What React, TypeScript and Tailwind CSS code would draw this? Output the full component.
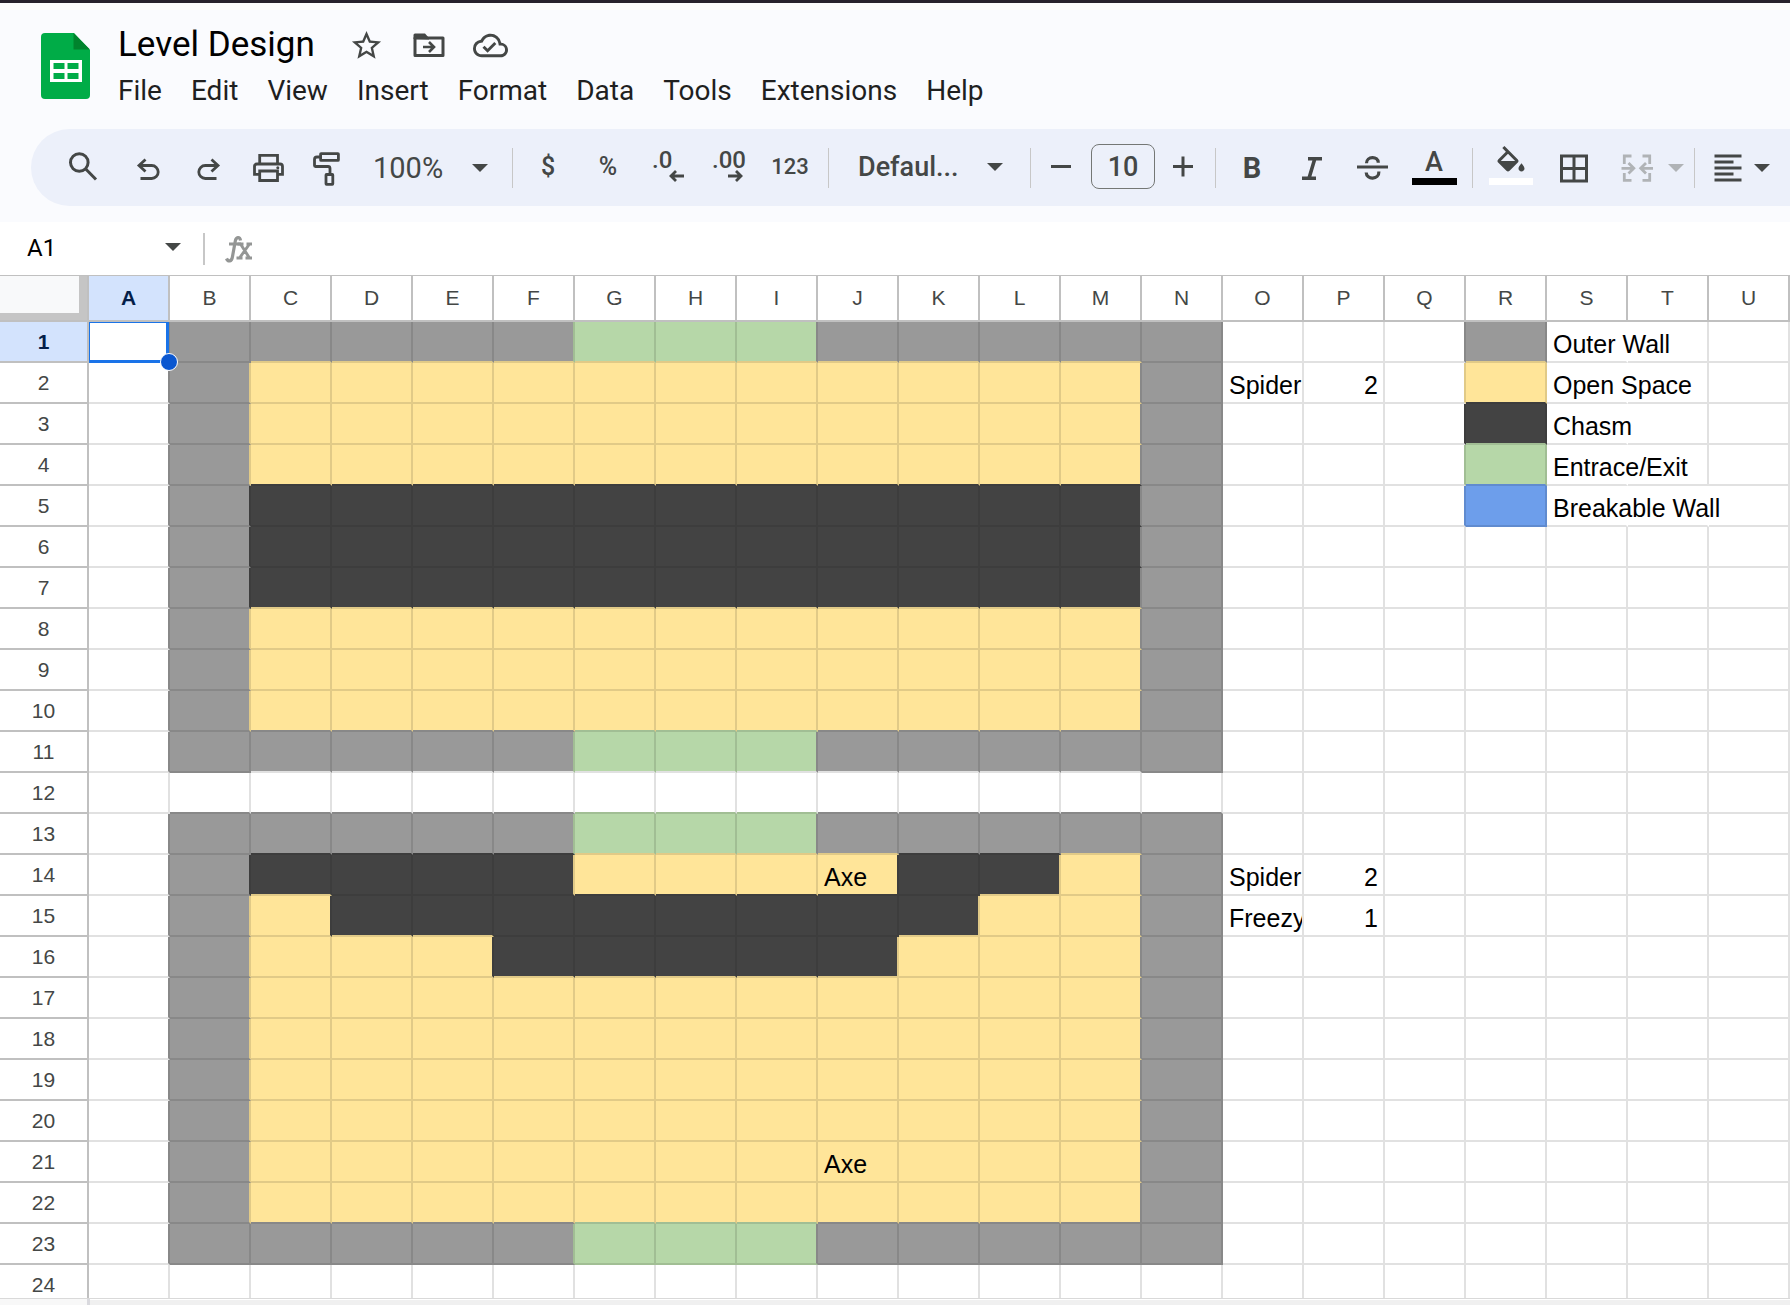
import type { ReactNode } from "react";
import { MdOutlineCloudDone, MdStarBorder } from "react-icons/md";

const COLUMNS = "ABCDEFGHIJKLMNOPQRSTU".split("");

// One character per cell: # wall, y open space, k chasm, g entrance, b breakable, . empty
const ROWS = [
  ".#####ggg#####...#...",
  ".#yyyyyyyyyyy#...y...",
  ".#yyyyyyyyyyy#...k...",
  ".#yyyyyyyyyyy#...g...",
  ".#kkkkkkkkkkk#...b...",
  ".#kkkkkkkkkkk#.......",
  ".#kkkkkkkkkkk#.......",
  ".#yyyyyyyyyyy#.......",
  ".#yyyyyyyyyyy#.......",
  ".#yyyyyyyyyyy#.......",
  ".#####ggg#####.......",
  ".....................",
  ".#####ggg#####.......",
  ".#kkkkyyyykky#.......",
  ".#ykkkkkkkkyy#.......",
  ".#yyykkkkkyyy#.......",
  ".#yyyyyyyyyyy#.......",
  ".#yyyyyyyyyyy#.......",
  ".#yyyyyyyyyyy#.......",
  ".#yyyyyyyyyyy#.......",
  ".#yyyyyyyyyyy#.......",
  ".#yyyyyyyyyyy#.......",
  ".#####ggg#####.......",
  ".....................",
];

const VALUES: Record<string, string> = {
  S1: "Outer Wall",
  S2: "Open Space",
  S3: "Chasm",
  S4: "Entrace/Exit",
  S5: "Breakable Wall",
  O2: "Spider",
  P2: "2",
  J14: "Axe",
  O14: "Spider",
  P14: "2",
  O15: "Freezy",
  P15: "1",
  J21: "Axe",
};

// Cells whose right grid line is hidden by text running over it
const OVERFLOWING = ["S1", "S2", "S3", "S4", "S5", "T5"];

const FILL: Record<string, string> = {
  ".": "",
  "#": "bg-[#999999]",
  y: "bg-[#ffe599]",
  k: "bg-[#434343]",
  g: "bg-[#b6d7a8]",
  b: "bg-[#6d9eeb]",
};
const RIGHT: Record<string, string> = {
  ".": "border-r-[#e1e1e1]",
  "#": "border-r-[#888888]",
  y: "border-r-[#e1ca87]",
  k: "border-r-[#3d3d3d]",
  g: "border-r-[#a1be94]",
  b: "border-r-[#608bcf]",
};
const BOTTOM: Record<string, string> = {
  ".": "border-b-[#e1e1e1]",
  "#": "border-b-[#888888]",
  y: "border-b-[#e1ca87]",
  k: "border-b-[#3d3d3d]",
  g: "border-b-[#a1be94]",
  b: "border-b-[#608bcf]",
};

function cellClasses(r: number, c: number) {
  const own = ROWS[r][c];
  const right = ROWS[r][c + 1] ?? ".";
  const below = ROWS[r + 1]?.[c] ?? ".";
  const rightKey = right === "." ? own : right;
  const clearedBelow = r === 10 && c > 1 && c < 13;
  const bottomKey = clearedBelow ? "." : below === "." ? own : below;
  const hidden = OVERFLOWING.includes(COLUMNS[c] + (r + 1));
  return `${FILL[own]} ${hidden ? "border-r-transparent" : RIGHT[rightKey]} ${BOTTOM[bottomKey]}`;
}

function Icon({ children, width = 2.8 }: { children: ReactNode; width?: number }) {
  return (
    <svg viewBox="0 0 40 40" className="h-10 w-10 shrink-0" fill="none" stroke="currentColor" strokeWidth={width} aria-hidden="true">
      {children}
    </svg>
  );
}

function Caret() {
  return (
    <svg viewBox="0 0 16 8" className="h-2 w-4 shrink-0" fill="currentColor" aria-hidden="true">
      <path d="M0 0h16L8 8z" />
    </svg>
  );
}

function Tool({ label, className = "w-[60px]", children }: { label: string; className?: string; children: ReactNode }) {
  return (
    <button type="button" aria-label={label} className={`flex h-full shrink-0 items-center justify-center ${className}`}>
      {children}
    </button>
  );
}

function Divider() {
  return <div className="h-10 w-px shrink-0 bg-[#c7c7c7]" />;
}

function Toolbar() {
  return (
    <div className="ml-[31px] mt-[18px] flex h-[77px] items-center overflow-hidden rounded-l-full bg-[#ecf0fa] pl-[22px] text-[#444746]">
      <Tool label="Search the menus">
        <Icon width={3}>
          <circle cx="16.3" cy="14.5" r="8.8" />
          <path d="M22.5 20.8 33 31.5" />
        </Icon>
      </Tool>
      <Tool label="Undo" className="ml-1.5 w-[60px]">
        <Icon>
          <path d="M16.5 11.5 10 17.5l6.5 6M10 17.5h12.7a6.5 6.5 0 0 1 0 13H11.5" />
        </Icon>
      </Tool>
      <Tool label="Redo" className="w-[58px]">
        <Icon>
          <path d="m23.5 11.5 6.5 6-6.5 6M30 17.5H17.3a6.5 6.5 0 0 0 0 13h11.2" />
        </Icon>
      </Tool>
      <Tool label="Print" className="w-[62px]">
        <Icon>
          <path d="M11.7 26.3H6.5v-7.8A2.5 2.5 0 0 1 9 16h23a2.5 2.5 0 0 1 2.5 2.5v7.8h-5M11.7 16V7.3h17.8V16M11.7 23h17.8v9.5H11.7z" />
          <circle cx="29.8" cy="19.8" r="1.5" fill="currentColor" stroke="none" />
        </Icon>
      </Tool>
      <Tool label="Paint format" className="w-[54px]">
        <Icon>
          <rect x="14.6" y="5.6" width="17.8" height="6.8" rx="0.5" />
          <path d="M14.5 9H11a2.5 2.5 0 0 0-2.5 2.5v6a1 1 0 0 0 1 1H22a2 2 0 0 1 2 2V26" />
          <rect x="20" y="26.5" width="6.8" height="9.8" rx="0.5" />
        </Icon>
      </Tool>
      <div className="relative ml-5 h-full w-[139px] shrink-0">
        <select aria-label="Zoom" className="h-full w-full appearance-none bg-transparent text-[29px] leading-10">
          <option>100%</option>
        </select>
        <span className="pointer-events-none absolute inset-y-0 right-6 flex items-center">
          <Caret />
        </span>
      </div>
      <Divider />
      <Tool label="Format as currency" className="ml-[5px] w-[60px]">
        <span className="pb-0.5 text-[25px] font-medium leading-8">$</span>
      </Tool>
      <Tool label="Format as percent">
        <span className="pb-0.5 text-[25px] font-medium leading-8">%</span>
      </Tool>
      <Tool label="Decrease decimal places">
        <span className="mb-1 flex w-8 flex-col text-left text-[24px] font-medium leading-5">
          .0
          <svg viewBox="0 0 16 12" className="h-3 w-4 self-end" fill="none" stroke="currentColor" strokeWidth="2.8" aria-hidden="true">
            <path d="M16 6H3M8 1 3 6l5 5" />
          </svg>
        </span>
      </Tool>
      <Tool label="Increase decimal places">
        <span className="mb-1 flex w-8 flex-col text-left text-[24px] font-medium leading-5">
          .00
          <svg viewBox="0 0 16 12" className="h-3 w-4 self-end" fill="none" stroke="currentColor" strokeWidth="2.8" aria-hidden="true">
            <path d="M0 6h13M8 1l5 5-5 5" />
          </svg>
        </span>
      </Tool>
      <Tool label="More formats" className="mr-1.5 w-16">
        <span className="pb-0.5 text-[22px] font-medium leading-8">123</span>
      </Tool>
      <Divider />
      <div className="relative ml-[29px] h-full w-[172px] shrink-0">
        <select aria-label="Font" className="h-full w-full appearance-none bg-transparent pb-0.5 text-[27px] font-medium leading-10">
          <option>Defaul...</option>
        </select>
        <span className="pointer-events-none absolute inset-y-0 right-[27px] flex items-center pb-0.5">
          <Caret />
        </span>
      </div>
      <Divider />
      <Tool label="Decrease font size">
        <Icon width={3}>
          <path d="M10 18.5h20" />
        </Icon>
      </Tool>
      <input
        aria-label="Font size"
        defaultValue="10"
        className="mb-0.5 h-[45px] w-16 shrink-0 rounded-lg border border-[#747775] bg-transparent text-center text-[27px] font-medium"
      />
      <Tool label="Increase font size" className="mr-1 w-14">
        <Icon width={3}>
          <path d="M10 18.5h20M20 8.5v20" />
        </Icon>
      </Tool>
      <Divider />
      <Tool label="Bold" className="ml-1.5 w-[60px]">
        <span className="text-[29px] font-bold leading-8">B</span>
      </Tool>
      <Tool label="Italic">
        <Icon width={3.6}>
          <path d="M16 10.8h14M10 30.2h14M22.8 10.8 17 30.2" />
        </Icon>
      </Tool>
      <Tool label="Strikethrough">
        <Icon width={3.2}>
          <path d="M5 19h31" />
          <path d="M14.5 15.3C14.3 8 26.5 7.6 26.3 14.8M14.2 24.5c.2 7.8 13 7.6 12.7-1" />
        </Icon>
      </Tool>
      <Tool label="Text color" className="mr-1.5 w-16 flex-col">
        <span className="pt-0.5 text-[27px] font-medium leading-8">A</span>
        <span className="mb-1.5 h-[7px] w-[45px] bg-black" />
      </Tool>
      <Divider />
      <Tool label="Fill color" className="ml-2 w-[60px] flex-col">
        <svg viewBox="0 0 24 18" className="h-[27px] w-9" fill="currentColor" aria-hidden="true">
          <path d="M16.56 8.94 7.62 0 6.21 1.41l2.38 2.38-5.15 5.15c-.59.59-.59 1.54 0 2.12l5.5 5.5c.29.29.68.44 1.06.44s.77-.15 1.06-.44l5.5-5.5c.59-.58.59-1.53 0-2.12zM5.21 10 10 5.21 14.79 10zM19 11.5s-2 2.17-2 3.5c0 1.1.9 2 2 2s2-.9 2-2c0-1.33-2-3.5-2-3.5z" />
        </svg>
        <span className="mb-1 mt-[5px] h-[7px] w-11 bg-white" />
      </Tool>
      <Tool label="Borders" className="w-[66px]">
        <Icon width={3}>
          <path d="M7.5 8h25v25h-25zM20 8v25M7.5 20.5h25" />
        </Icon>
      </Tool>
      <div className="flex h-full items-center text-[#b0b3b6]">
        <Tool label="Merge cells">
          <Icon>
            <path d="M14.5 8H7.3v8M7.3 25v7.3h7.2M25.5 8h7.2v8M32.7 25v7.3h-7.2M4.5 20.3H16M11.5 15l5.3 5.3-5.3 5.3M36 20.3H24.5M29 15l-5.3 5.3 5.3 5.3" />
          </Icon>
        </Tool>
        <Tool label="Merge type" className="mr-[9px] w-[18px]">
          <Caret />
        </Tool>
      </div>
      <Divider />
      <Tool label="Horizontal align" className="ml-1.5 w-[53px]">
        <Icon>
          <path d="M6.5 8h27M6.5 14h19M6.5 20h27M6.5 26h19M6.5 32h27" />
        </Icon>
      </Tool>
      <Tool label="Alignment options" className="w-4">
        <Caret />
      </Tool>
    </div>
  );
}

function Header() {
  return (
    <header className="border-t-[3px] border-[#25212e] bg-[#fafbfe] pb-4">
      <div className="flex pl-[41px] pt-[22px]">
        <svg viewBox="0 0 49 66" className="mt-2 h-[66px] w-[49px] shrink-0" aria-hidden="true">
          <path d="M4 0h29l16 17v45a4 4 0 0 1-4 4H4a4 4 0 0 1-4-4V4a4 4 0 0 1 4-4z" fill="#00ac47" />
          <path d="M32.5 0 49 16.5H32.5z" fill="#00832d" />
          <path fillRule="evenodd" d="M9 27h32v22H9zM12.5 30v6h11v-6zM26.5 30v6h11v-6zM12.5 40v6h11v-6zM26.5 40v6h11v-6z" fill="#fff" />
        </svg>
        <div className="ml-7">
          <div className="flex h-10 items-center text-[#444746]">
            <h1 className="text-[35px] leading-10 text-black">Level Design</h1>
            <button type="button" aria-label="Star" className="ml-[21px] flex w-[62px] justify-center">
              <MdStarBorder className="size-[35px]" />
            </button>
            <button type="button" aria-label="Move" className="flex w-[62px] justify-center">
              <svg viewBox="0 0 32 24" className="h-6 w-8" fill="none" stroke="currentColor" strokeWidth="3" aria-hidden="true">
                <path d="M2 5h28v17.5H2z" strokeLinejoin="round" />
                <path d="M.5 6V2A1.5 1.5 0 0 1 2 .5h10L16 5v1.5z" fill="currentColor" stroke="none" />
                <path d="M10 14h10M16 9l5 5-5 5" strokeWidth="2.6" />
              </svg>
            </button>
            <button type="button" aria-label="See document status" className="flex w-[62px] justify-center">
              <MdOutlineCloudDone className="size-[35px]" />
            </button>
          </div>
          <nav className="mt-1.5 flex gap-[29px] text-[28px] leading-10 text-[#1f1f1f]">
            {["File", "Edit", "View", "Insert", "Format", "Data", "Tools", "Extensions", "Help"].map((item) => (
              <button key={item} type="button">
                {item}
              </button>
            ))}
          </nav>
        </div>
      </div>
      <Toolbar />
    </header>
  );
}

function FormulaBar() {
  return (
    <div className="flex h-[53px] shrink-0 items-center bg-white pb-1 text-[#444746]">
      <input aria-label="Name box" defaultValue="A1" className="mt-0.5 w-[165px] pl-[27px] text-[24px] leading-8 text-black" />
      <Caret />
      <div className="ml-[22px] mt-1 h-8 w-0.5 bg-[#c7c7c7]" />
      <label htmlFor="formula" className="ml-5 mt-1 text-[#949695]">
        <svg viewBox="0 0 28 28" className="size-7" fill="none" stroke="currentColor" strokeWidth="3.2" role="img" aria-label="Formula">
          <path d="M15.5 5.500C15 1 11 2 10.300 6L7.500 21.500C6.800 27 3 27 1.500 23.500M4 9h12" />
          <path d="M15.500 9l9 14M24.500 9 14.500 23M12.500 9h6M21.500 9H27M11.500 23h6M20.500 23H27" strokeWidth="2.900" />
        </svg>
      </label>
      <input id="formula" className="ml-4 min-w-0 flex-1 text-[25px] outline-none" />
    </div>
  );
}

function Grid() {
  return (
    <div className="min-h-0 flex-1 overflow-hidden border-t border-[#c0c0c0] bg-white">
      <table className="w-[1790px] table-fixed border-separate border-spacing-0 font-['Liberation_Sans',Arial,sans-serif]">
        <thead>
          <tr className="h-[46px] text-[21px] text-[#444746]">
            <th aria-label="Select all" className="w-[89px] border-b-2 border-r-2 border-[#c0c0c0] p-0">
              <div className="h-11 border-b-[7px] border-r-8 border-[#c5c5c5] bg-[#f8f9fa]" />
            </th>
            {COLUMNS.map((col) => (
              <th
                key={col}
                scope="col"
                className={`w-[81px] border-b-2 border-r-2 border-[#c0c0c0] p-0 leading-8 ${
                  col === "A" ? "bg-[#d3e3fd] font-bold text-[#041e49]" : "font-normal"
                }`}
              >
                {col}
              </th>
            ))}
          </tr>
        </thead>
        <tbody>
          {ROWS.map((row, r) => (
            <tr key={r} className="h-[41px]">
              <th
                scope="row"
                className={`border-b-2 border-r-2 border-[#c0c0c0] p-0 text-[21px] leading-8 ${
                  r === 0 ? "bg-[#d3e3fd] font-bold text-[#041e49]" : "font-normal text-[#444746]"
                }`}
              >
                {r + 1}
              </th>
              {row.split("").map((_, c) => {
                const col = COLUMNS[c];
                const value = VALUES[col + (r + 1)];
                return (
                  <td
                    key={col}
                    className={`relative whitespace-nowrap border-b-2 border-r-2 p-0 align-bottom text-[25px] leading-[34px] text-black ${
                      col === "P" ? "pr-[5px] text-right" : "pl-1.5"
                    } ${col === "O" ? "overflow-hidden" : ""} ${cellClasses(r, c)}`}
                  >
                    {value}
                    {r === 0 && c === 0 && (
                      <>
                        <span className="absolute -bottom-0.5 -right-px left-0 top-0 z-10 border-b-[3px] border-l border-r-[3px] border-t border-[#1a73e8]" />
                        <span className="absolute -bottom-2.5 -right-2.5 z-20 size-[18px] rounded-full border border-white bg-[#0b57d0]" />
                      </>
                    )}
                  </td>
                );
              })}
            </tr>
          ))}
        </tbody>
      </table>
    </div>
  );
}

export default function App() {
  return (
    <div className="flex h-screen flex-col overflow-hidden bg-white font-[Roboto,sans-serif]">
      <Header />
      <FormulaBar />
      <Grid />
      <div className="flex h-[7px] shrink-0 border-t border-[#d9d9d9]">
        <div className="w-[87px] bg-[#f8f8f8]" />
        <div className="w-[3px] bg-[#d9d9de]" />
        <div className="mt-px flex-1 bg-[#f0f0f0]" />
      </div>
    </div>
  );
}
